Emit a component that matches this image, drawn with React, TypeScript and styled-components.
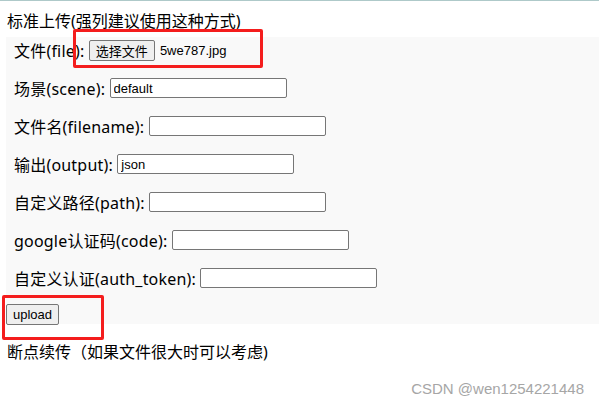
import React from "react";
import styled, { createGlobalStyle } from "styled-components";

const GlobalStyle = createGlobalStyle`
  html, body {
    margin: 0;
    padding: 0;
    background: #ffffff;
  }
  body {
    font-family: "Noto Sans", "Noto Sans CJK SC", sans-serif;
    color: #000;
  }
`;

const Page = styled.div`
  position: relative;
  width: 599px;
  height: 406px;
  border-top: 1px solid #aec9c9;
  box-sizing: border-box;
  overflow: hidden;
`;

const Heading = styled.div`
  height: 36px;
  display: flex;
  align-items: center;
  padding: 2px 0 0 7px;
  box-sizing: border-box;
  font-size: 16px;
`;

const Panel = styled.form`
  margin-left: 6px;
  padding-top: 1px;
  background: #f9f9f9;
  display: flex;
  flex-direction: column;
  gap: 14px;
`;

const Row = styled.div`
  height: 24px;
  display: flex;
  align-items: center;
  padding-left: 8px;
  font-size: 16px;
  letter-spacing: 0.2px;
  white-space: pre;
`;

const TextInput = styled.input`
  width: 177px;
  height: 20px;
  box-sizing: border-box;
  border: 1px solid #767676;
  border-radius: 2px;
  padding: 1px 3px;
  background: #fff;
  font-family: "Liberation Sans", Arial, sans-serif;
  font-size: 13px;
  letter-spacing: 0;
  color: #000;
  outline: none;
`;

const NativeButton = styled.button<{ $cjk?: boolean }>`
  height: 21px;
  box-sizing: border-box;
  padding: 0 6px;
  border: 1px solid #767676;
  border-radius: 2px;
  background: #efefef;
  font-family: ${(p) =>
    p.$cjk ? `"Noto Sans CJK SC", sans-serif` : `"Liberation Sans", Arial, sans-serif`};
  font-size: 13px;
  line-height: 1;
  letter-spacing: 0;
  color: #000;
`;

const FileName = styled.span`
  margin-left: 5px;
  font-family: "Liberation Sans", Arial, sans-serif;
  font-size: 13px;
  letter-spacing: 0;
`;

const SubmitRow = styled.div`
  height: 20px;
  display: flex;
  align-items: center;
`;

const Footer = styled.div`
  margin-top: 16px;
  padding-left: 7px;
  line-height: 24px;
  font-size: 16px;
`;

const Mark = styled.div<{ $left: number; $top: number; $w: number; $h: number }>`
  position: absolute;
  left: ${(p) => p.$left}px;
  top: ${(p) => p.$top}px;
  width: ${(p) => p.$w}px;
  height: ${(p) => p.$h}px;
  box-sizing: border-box;
  border: 3px solid #f41d1d;
  border-radius: 2px;
  pointer-events: none;
`;

const Watermark = styled.div`
  position: absolute;
  right: 15px;
  top: 379px;
  font-family: "Liberation Sans", Arial, sans-serif;
  font-size: 15px;
  color: #a6a6a6;
`;

const fields: { label: string; value?: string }[] = [
  { label: "场景(scene): ", value: "default" },
  { label: "文件名(filename): " },
  { label: "输出(output): ", value: "json" },
  { label: "自定义路径(path): " },
  { label: "google认证码(code): " },
  { label: "自定义认证(auth_token): " },
];

export default function App() {
  return (
    <Page>
      <GlobalStyle />
      <Heading>标准上传(强列建议使用这种方式)</Heading>
      <Panel onSubmit={(e) => e.preventDefault()}>
        <Row>
          文件(file):{" "}
          <NativeButton type="button" $cjk>
            选择文件
          </NativeButton>
          <FileName>5we787.jpg</FileName>
        </Row>
        {fields.map((f) => (
          <Row key={f.label}>
            {f.label}
            <TextInput defaultValue={f.value ?? ""} />
          </Row>
        ))}
        <SubmitRow>
          <NativeButton type="submit">upload</NativeButton>
        </SubmitRow>
      </Panel>
      <Footer>断点续传（如果文件很大时可以考虑)</Footer>
      <Mark $left={73} $top={28} $w={190} $h={39} />
      <Mark $left={2} $top={294} $w={102} $h={45} />
      <Watermark>CSDN @wen1254221448</Watermark>
    </Page>
  );
}
